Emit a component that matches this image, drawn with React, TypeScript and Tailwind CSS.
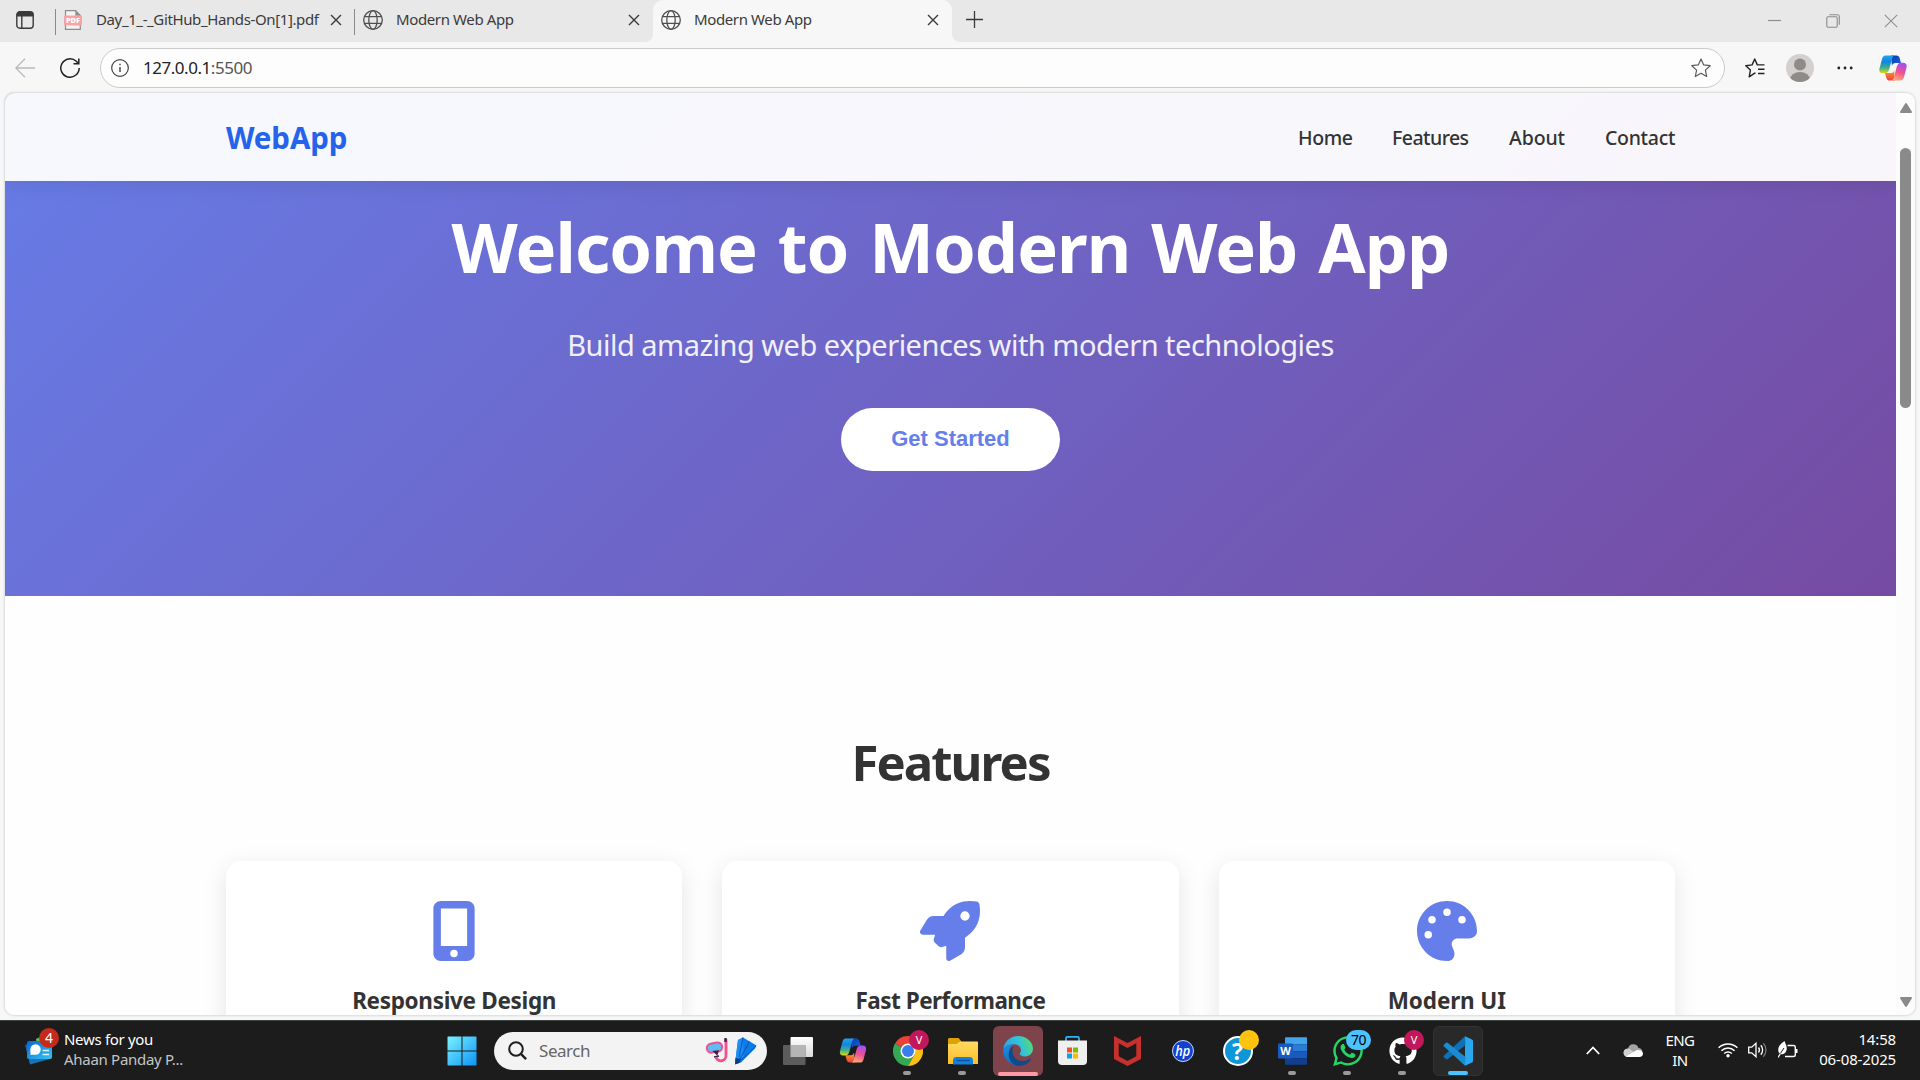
import type { ReactNode } from "react";
import { FaMobileScreenButton, FaPalette, FaRocket, FaWhatsapp, FaGithub } from "react-icons/fa6";

function Globe() {
  return (
    <svg className="h-5 w-5 shrink-0" viewBox="0 0 20 20" fill="none" stroke="#4f4f4f" strokeWidth="1.3">
      <circle cx="10" cy="10" r="9.3" />
      <ellipse cx="10" cy="10" rx="4.2" ry="9.3" />
      <path d="M1.6 6.6h16.8M1.6 13.4h16.8" />
    </svg>
  );
}

function PdfIcon() {
  return (
    <svg className="h-5 w-5 shrink-0" viewBox="0 0 20 20">
      <path d="M2.5.7h10l4.8 4.8v13.8H2.5z" fill="#f4f4f4" stroke="#8c8c8c" strokeWidth="1.2" />
      <path d="M12.3.7v5h5z" fill="#8c8c8c" />
      <rect x="1" y="5.5" width="18" height="10" rx="1" fill="#f7a3a3" />
      <text x="10" y="13.4" textAnchor="middle" fontSize="7.4" fontWeight="800" fill="#fff" fontFamily="Open Sans, sans-serif">PDF</text>
    </svg>
  );
}

function CloseX() {
  return (
    <svg className="h-3 w-3 shrink-0" viewBox="0 0 12 12" stroke="#3a3a3a" strokeWidth="1.4">
      <path d="M1 1l10 10M11 1L1 11" />
    </svg>
  );
}

function Tab({ icon, title, className }: { icon: ReactNode; title: string; className: string }) {
  return (
    <div className={`flex h-full items-center pr-[13px] ${className}`}>
      {icon}
      <span className="mb-0.5 ml-[13px] flex-1 whitespace-nowrap text-[15px] leading-5 tracking-[-0.38px] text-[#3b3b3b]">{title}</span>
      <CloseX />
    </div>
  );
}

function TabStrip() {
  return (
    <div className="flex h-[42px] bg-[#f7f7f7]">
      <div className="flex w-[653px] items-center rounded-br-lg bg-[#e8e8e8] pb-0.5">
        <svg className="ml-4 h-[18px] w-[18px]" viewBox="0 0 18 18">
          <rect x=".8" y=".8" width="16.4" height="16.4" rx="3" fill="none" stroke="#3a3a3a" strokeWidth="1.4" />
          <path d="M.8 5.5V4a3.2 3.2 0 0 1 3.2-3.2h10A3.2 3.2 0 0 1 17.2 4v1.5z" fill="#3a3a3a" />
          <path d="M5.8 5v12" stroke="#3a3a3a" strokeWidth="1.4" />
        </svg>
        <div className="ml-[21px] mt-1 h-[26px] w-px bg-[#8a8a8a]" />
        <Tab icon={<PdfIcon />} title="Day_1_-_GitHub_Hands-On[1].pdf" className="w-[299px] pl-[7px]" />
        <div className="-ml-px mt-1 h-[26px] w-px bg-[#8a8a8a]" />
        <Tab icon={<Globe />} title="Modern Web App" className="flex-1 pl-2" />
      </div>
      <div className="w-[299px] bg-linear-to-b from-[#e8e8e8] from-50% to-[#f7f7f7] to-50%">
        <Tab icon={<Globe />} title="Modern Web App" className="rounded-t-[10px] bg-[#f7f7f7] pb-0.5 pl-2" />
      </div>
      <div className="flex flex-1 items-center rounded-bl-lg bg-[#e8e8e8] pl-3.5 pr-[22px]">
        <svg className="mb-1 h-[17px] w-[17px]" viewBox="0 0 17 17" stroke="#3a3a3a" strokeWidth="1.3"><path d="M8.5 0v17M0 8.5h17" /></svg>
        <div className="flex-1" />
        <svg className="h-3.5 w-[13px]" viewBox="0 0 13 14" stroke="#8f8f8f" strokeWidth="1.2"><path d="M0 6.5h13" /></svg>
        <svg className="ml-[45px] h-3.5 w-3.5" viewBox="0 0 14 14" fill="none" stroke="#8a8a8a" strokeWidth="1.1">
          <rect x=".8" y="2.8" width="10.4" height="10.4" rx="1.2" />
          <path d="M3.4.8h8A1.9 1.9 0 0 1 13.3 2.7v8" />
        </svg>
        <svg className="ml-[44px] h-3.5 w-3.5" viewBox="0 0 14 14" stroke="#8f8f8f" strokeWidth="1.1"><path d="M.8.8l12.4 12.4M13.2.8L.8 13.2" /></svg>
      </div>
    </div>
  );
}

function Copilot({ id, className }: { id: string; className: string }) {
  return (
    <svg className={className} viewBox="0 0 28 26">
      <defs>
        <linearGradient id={`${id}a`} x1="0" y1="0" x2="0" y2="1">
          <stop offset="0" stopColor="#1fa4f2" /><stop offset=".35" stopColor="#1584e0" /><stop offset=".7" stopColor="#3fb28a" /><stop offset="1" stopColor="#f2d50f" />
        </linearGradient>
        <linearGradient id={`${id}b`} x1=".6" y1="0" x2=".3" y2="1">
          <stop offset="0" stopColor="#a44ff0" /><stop offset=".5" stopColor="#ee5290" /><stop offset="1" stopColor="#ffae74" />
        </linearGradient>
        <linearGradient id={`${id}c`} x1="0" y1="0" x2="1" y2="1">
          <stop offset="0" stopColor="#0a3fa8" /><stop offset="1" stopColor="#1760e8" />
        </linearGradient>
        <linearGradient id={`${id}d`} x1="0" y1="0" x2="0" y2="1">
          <stop offset="0" stopColor="#f8a21c" /><stop offset="1" stopColor="#ee3d45" />
        </linearGradient>
      </defs>
      <path d="M12 .5h5.5c1.7 0 2.600 1 3.100 2.600L22 8h-5.500c-2 0-3 .8-3.600 2.800z" fill={`url(#${id}c)`} />
      <path d="M16 25.500h-5.500c-1.700 0-2.600-1-3.100-2.600L6 18h5.500c2 0 3-.8 3.600-2.800z" fill={`url(#${id}d)`} />
      <path d="M6.500.5H16c-1.500 0-2.300 1.200-2.800 3L10.300 14c-.8 2.800-2 4.300-4.600 4.300H3.800C1 18.300-.2 16.300.5 13.500L3 4C3.600 1.700 4.700.5 6.500.5z" fill={`url(#${id}a)`} />
      <path d="M21.500 25.500H12c1.500 0 2.300-1.200 2.800-3L17.700 12c.8-2.800 2-4.300 4.600-4.300h1.900c2.800 0 4 2 3.300 4.800L25 22c-.6 2.300-1.700 3.500-3.500 3.500z" fill={`url(#${id}b)`} />
    </svg>
  );
}

function Toolbar() {
  return (
    <div className="flex h-[51px] items-center pl-[15px] pr-[13px]">
      <svg className="h-5 w-5" viewBox="0 0 20 20" fill="none" stroke="#b9b9b9" strokeWidth="1.3"><path d="M20 10H.8M10 .8L.8 10l9.2 9.2" /></svg>
      <svg className="ml-[25px] h-5 w-5" viewBox="0 0 20 20" fill="none" stroke="#222" strokeWidth="1.5">
        <path d="M19.2 10a9.2 9.2 0 1 1-2.9-6.700L18.600 5.600" /><path d="M18.8.5v5.300h-5.300" />
      </svg>
      <div className="ml-5 flex h-10 w-[1625px] items-center rounded-full border border-[#cbcbcb] bg-[#fdfdfd] pl-2.5 pr-[13px]">
        <svg className="h-[18px] w-[18px]" viewBox="0 0 18 18" fill="none" stroke="#444" strokeWidth="1.2">
          <circle cx="9" cy="9" r="8.3" /><path d="M9 8v5M9 4.8v1.500" strokeWidth="1.4" />
        </svg>
        <span className="ml-3.5 flex-1 text-[17px] leading-6 tracking-[-0.47px] text-[#222]">127.0.0.1<span className="text-[#555]">:5500</span></span>
        <svg className="h-5 w-5" viewBox="0 0 20 20" fill="none" stroke="#5a5a5a" strokeWidth="1.2" strokeLinejoin="round">
          <path d="M10 1l2.700 5.900 6.500.8-4.800 4.400 1.300 6.400L10 15.300l-5.700 3.200 1.300-6.400L.8 7.700l6.500-.8z" />
        </svg>
      </div>
      <svg className="ml-5 h-5 w-5" viewBox="0 0 20 20" fill="none" stroke="#222" strokeWidth="1.4" strokeLinejoin="round">
        <path d="M10.500 15.300l-.8-.2-5.500 3.700 1.200-6.700L.8 7.700l6.300-.8L9.700 1l2.600 5.900h7.200M13 11.200h6.500M13 15.500h6.500" />
      </svg>
      <svg className="ml-[21px] h-7 w-7" viewBox="0 0 28 28">
        <defs><clipPath id="avatar"><circle cx="14" cy="14" r="14" /></clipPath></defs>
        <circle cx="14" cy="14" r="14" fill="#d3d0cd" />
        <g clipPath="url(#avatar)" fill="#8f8b88"><circle cx="14" cy="10.500" r="6" /><ellipse cx="14" cy="26" rx="10" ry="8" /></g>
      </svg>
      <svg className="ml-[23px] h-4 w-4" viewBox="0 0 16 16" fill="#222"><circle cx="1.800" cy="8" r="1.400" /><circle cx="8" cy="8" r="1.400" /><circle cx="14.200" cy="8" r="1.400" /></svg>
      <Copilot id="tb" className="ml-[26px] h-[26px] w-7" />
    </div>
  );
}

function Card({ icon, title, track }: { icon: ReactNode; title: string; track: string }) {
  return (
    <div className="flex h-60 flex-1 flex-col items-center rounded-[15px] bg-white pt-10 shadow-[0_6px_25px_rgba(0,0,0,0.1)]">
      <div className="text-[60px] text-[#667eea]">{icon}</div>
      <h3 className={`mt-[22px] text-[22.5px] font-bold leading-9 text-[#333] ${track}`}>{title}</h3>
    </div>
  );
}

function Page() {
  return (
    <div className="h-[922px] w-[1891px] overflow-hidden bg-[#fefefe]">
      <nav className="relative z-10 flex h-[88px] items-center bg-white/95 pl-[221px] pr-[220px] pt-0.5 shadow-[0_2px_20px_rgba(0,0,0,0.1)]">
        <span className="text-[29.5px] font-bold leading-10 tracking-[-0.1px] text-[#2563eb]">WebApp</span>
        <div className="ml-auto flex text-[19.5px] font-medium leading-8 text-[#333]">
          <a className="w-[94px] tracking-[-0.4px]">Home</a>
          <a className="w-[117px] tracking-[-0.54px]">Features</a>
          <a className="w-[96px] tracking-[-0.1px]">About</a>
          <a className="w-[71px] tracking-[-0.3px]">Contact</a>
        </div>
      </nav>
      <section className="-mt-[176px] flex h-[591px] flex-col items-center bg-[linear-gradient(135deg,#667eea_0%,#764ba2_100%)] pt-[186px] text-white">
        <h1 className="text-[68.5px] font-bold leading-[112px] tracking-[-0.95px] [word-spacing:4px]">Welcome to Modern Web App</h1>
        <p className="mt-[18px] text-[29px] leading-[48px] tracking-[-0.5px] opacity-90">Build amazing web experiences with modern technologies</p>
        <button className="mt-[39px] h-[63px] w-[219px] rounded-full bg-white pb-0.5 font-['Liberation_Sans',sans-serif] text-[22px] font-bold text-[#667eea]">Get Started</button>
      </section>
      <section className="pl-[221px] pr-[221px] pt-[126px]">
        <h2 className="text-center text-[49px] font-bold leading-[80px] tracking-[-1.9px] text-[#333]">Features</h2>
        <div className="mt-[59px] flex gap-10">
          <Card icon={<FaMobileScreenButton />} title="Responsive Design" track="tracking-[-0.31px]" />
          <Card icon={<FaRocket />} title="Fast Performance" track="tracking-[-0.5px]" />
          <Card icon={<FaPalette />} title="Modern UI" track="tracking-[-0.13px]" />
        </div>
      </section>
    </div>
  );
}

function ScrollBar() {
  return (
    <div className="flex flex-1 flex-col items-center bg-[#fcfcfc] pb-[8px] pt-[10px]">
      <svg className="h-2.5 w-3" viewBox="0 0 12 10" fill="#8a8a8a"><path d="M5 .8a1.200 1.200 0 0 1 2 0L11.800 8.400a1 1 0 0 1-.9 1.600H1.100A1 1 0 0 1 .2 8.400z" /></svg>
      <div className="mt-[35px] h-[260px] w-[11px] rounded-full bg-[#8a8a8a]" />
      <svg className="mt-auto h-2.5 w-3" viewBox="0 0 12 10" fill="#8a8a8a"><path d="M5 9.200a1.200 1.200 0 0 0 2 0L11.800 1.600A1 1 0 0 0 10.900 0H1.100A1 1 0 0 0 .2 1.600z" /></svg>
    </div>
  );
}

function TaskItem({ children, dot }: { children: ReactNode; dot?: boolean }) {
  return (
    <div className="relative flex h-[50px] w-[55px] items-center justify-center">
      {children}
      {dot && <div className="absolute bottom-[1px] left-[23px] h-1 w-2 rounded-full bg-[#9a9a9a]" />}
    </div>
  );
}

function ProfileBadge() {
  return <div className="flex h-5 w-5 items-center justify-center rounded-full bg-[#c2185b] text-[11px] leading-none text-white">V</div>;
}

function NewsWidget() {
  return (
    <div className="flex w-[446px] pl-[25px]">
      <div className="relative w-[39px]">
        <svg className="mt-4 h-[28px] w-[28px]" viewBox="0 0 28 28">
          <defs><linearGradient id="news" x1="0" y1="0" x2="1" y2="1"><stop offset="0" stopColor="#0a63d8" /><stop offset="1" stopColor="#35c8ee" /></linearGradient></defs>
          <path d="M11 2l6-3 3 8-8 2z" fill="#5fc05a" />
          <path d="M0 8l3-1 20 13-18 7z" fill="#1565a8" />
          <rect x="2" y="4" width="25" height="18" rx="2" fill="url(#news)" />
          <path d="M4 22h21L5 27.500z" fill="#1a72b8" />
          <circle cx="10.500" cy="12.500" r="5.200" fill="#fff" /><path d="M5.500 13v5l5-.8z" fill="#fff" />
          <path d="M17.500 13.500h6.500M17.500 17.500h6.500" stroke="#d8f4ff" strokeWidth="1.600" />
        </svg>
        <div className="absolute left-[14px] top-[7px] flex h-5 w-5 items-center justify-center rounded-full bg-[#c42b1c] text-[14px] leading-none text-white">4</div>
      </div>
      <div className="flex flex-col pt-2 text-[15px] leading-5">
        <span className="tracking-[-0.31px] text-white">News for you</span>
        <span className="tracking-[-0.29px] text-[#c4c4c4]">Ahaan Panday P...</span>
      </div>
    </div>
  );
}

function SearchBox() {
  return (
    <div className="ml-[18px] mr-[3px] flex h-[38px] w-[273px] items-center rounded-full bg-[#f3f3f3] pl-3.5 pr-2.5">
      <svg className="h-[19px] w-[19px]" viewBox="0 0 19 19" fill="none" stroke="#1f1f1f" strokeWidth="2"><circle cx="8" cy="8" r="6.8" /><path d="M12.900 12.900l5.200 5.200" strokeWidth="2.400" /></svg>
      <span className="ml-3 mt-px flex-1 text-[17px] leading-6 tracking-[-0.45px] text-[#666]">Search</span>
      <svg className="h-7 w-[52px]" viewBox="0 0 52 28">
        <path d="M21 2v16a5.200 5.200 0 0 1-10 2.500" fill="none" stroke="#f2508c" strokeWidth="2.800" />
        <path d="M20.500 1v4" stroke="#43204f" strokeWidth="2.400" />
        <rect x="2" y="6" width="15.500" height="9" rx="4.500" transform="rotate(-10 10 12)" fill="#5fbdf5" stroke="#f2508c" strokeWidth="2" />
        <path d="M9 14.500l4-.5-1 3.500zM9 20l5-1" stroke="#43204f" strokeWidth="1.400" fill="#43204f" />
        <path d="M33 3l5-2.500 13.500 8-1.500 3L36 25.500l-6 1.500z" fill="#0c7be8" />
        <path d="M33 3l5-2.500.5 19.500-8.500 6z" fill="#1a90f5" />
        <path d="M38 .5L34 20M44.500 4.500L35 22M51 9L36 23" stroke="#0754b8" strokeWidth="1" />
        <path d="M30.500 21l5.500 1-1.500 4-4.500 1.500z" fill="#0b3c86" />
      </svg>
    </div>
  );
}

function Taskbar() {
  return (
    <div className="flex h-[60px] border-t border-[#3c4442] bg-[#1c1c1c]">
      <NewsWidget />
      <div className="flex w-[1043px] items-center">
        <svg className="ml-px h-[30px] w-[30px]" viewBox="0 0 30 30">
          <defs><linearGradient id="win" gradientUnits="userSpaceOnUse" x1="0" y1="0" x2="30" y2="30"><stop offset="0" stopColor="#7df3ff" /><stop offset="1" stopColor="#0a93f5" /></linearGradient></defs>
          <path d="M1 .5h13.500v14H.5V1zM15.500.5H29l.5.5v13.500h-14zM.5 15.500h14v14H1l-.5-.5zM15.500 15.500h14V29l-.5.5H15.500z" fill="url(#win)" />
        </svg>
        <div className="-ml-px"><SearchBox /></div>
        <TaskItem>
          <svg className="h-7 w-[30px]" viewBox="0 0 30 28">
            <defs><linearGradient id="tv" x1="0" y1="0" x2="0" y2="1"><stop offset="0" stopColor="#fff" /><stop offset="1" stopColor="#dadada" /></linearGradient></defs>
            <rect x="7.500" y="0" width="22.500" height="20" rx="1" fill="url(#tv)" />
            <rect x="0" y="8" width="22.500" height="20" rx="1" fill="#5c5c5c" />
            <rect x="7.500" y="8" width="15" height="12" fill="#b5b5b5" />
          </svg>
        </TaskItem>
        <TaskItem><Copilot id="ts" className="h-[25px] w-7" /></TaskItem>
        <TaskItem dot>
          <svg className="h-[30px] w-[30px]" viewBox="0 0 30 30">
            <path d="M15 15L2 7.500A15 15 0 0 1 28 7.500L28 8z" fill="#ea4335" />
            <path d="M2 7.500A15 15 0 0 0 15 30l6.500-11.300L15 15z" fill="#34a853" />
            <path d="M28 7.500A15 15 0 0 1 15 30l6.500-11.300V7.500z" fill="#fbc116" />
            <circle cx="15" cy="15" r="7.500" fill="#fff" /><circle cx="15" cy="15" r="6" fill="#3b7ded" />
          </svg>
          <div className="absolute left-[29px] top-[4px]"><ProfileBadge /></div>
        </TaskItem>
        <TaskItem dot>
          <svg className="h-[28px] w-[30px]" viewBox="0 0 30 28">
            <defs><linearGradient id="fe" x1="0" y1="0" x2="0" y2="1"><stop offset="0" stopColor="#ffdb63" /><stop offset="1" stopColor="#fdbd28" /></linearGradient></defs>
            <path d="M0 2.500C0 1.500.7 1 1.500 1h9l3 3.500L9 8H0z" fill="#e0a106" />
            <path d="M0 7h8.500L12 4.500h17c.6 0 1 .4 1 1V27H0z" fill="url(#fe)" />
            <path d="M5 27.500v-4A3.500 3.500 0 0 1 8.500 20h13a3.500 3.500 0 0 1 3.500 3.500v4z" fill="#1380dd" />
            <path d="M8.500 23.500h13" stroke="#0a4f9c" strokeWidth="1.300" />
          </svg>
        </TaskItem>
        <TaskItem>
          <div className="relative flex h-[50px] w-[50px] shrink-0 items-center justify-center rounded-md bg-[#7f434b]">
            <svg className="h-[30px] w-[30px]" viewBox="0 0 30 30">
              <defs>
                <linearGradient id="e1" x1="0" y1=".3" x2="1" y2="0"><stop offset="0" stopColor="#2ba7e6" /><stop offset=".5" stopColor="#33c3d8" /><stop offset="1" stopColor="#63e04f" /></linearGradient>
                <linearGradient id="e2" x1="0" y1="0" x2="0" y2="1"><stop offset="0" stopColor="#1b8fe0" /><stop offset="1" stopColor="#0c6fc4" /></linearGradient>
              </defs>
              <path d="M.3 13.500C1 5.500 7.300 0 15 0c8.700 0 15 6.200 15 12.800 0 4.400-3.500 7.700-7.800 7.700-3.700 0-5.500-1.600-5.500-2.700 0-.8 1.300-1.400 1.300-3.800 0-3-2.800-5.700-6.800-5.700C6 8.300 2 10.500.3 13.500z" fill="url(#e1)" />
              <path d="M.2 14C2 10 6 8.300 11.200 8.300c-4 1.400-5.500 5-4.800 9.200.8 5.700 5.600 10.500 11.300 11.900A15 15 0 0 1 .2 14z" fill="url(#e2)" />
              <path d="M11.200 10.200C8.500 13 9 19 12.500 22.400c3.600 3.300 9.300 3.800 14.500.3.700-.5 1.300.1.900.8-2 3.600-6.400 6.500-12.400 6.500C9.500 29 5.500 24 5.700 18c.1-4 2.200-6.800 5.500-7.800z" fill="#114a8b" />
            </svg>
            <div className="absolute bottom-0 left-[5px] h-1 w-10 rounded-full bg-[#ff99a4]" />
          </div>
        </TaskItem>
        <TaskItem>
          <svg className="h-[29px] w-[29px]" viewBox="0 0 29 29">
            <path d="M8 5V2.200C8 1.200 8.600.8 9.400.8h10.200c.9 0 1.400.5 1.400 1.400V5" fill="none" stroke="#2fb5f3" strokeWidth="1.700" />
            <path d="M0 4.500h29V25a4 4 0 0 1-4 4H4a4 4 0 0 1-4-4z" fill="#efefef" />
            <path d="M9 11.500h5v5H9z" fill="#f25022" /><path d="M15 11.500h5v5h-5z" fill="#7fba00" /><path d="M9 17.500h5v5H9z" fill="#00a4ef" /><path d="M15 17.500h5v5h-5z" fill="#ffb900" />
          </svg>
        </TaskItem>
        <TaskItem>
          <svg className="h-[30px] w-[27px]" viewBox="0 0 27 30"><path d="M0 0l13.500 7L27 0v23l-13.500 7L0 23zM4.700 7.200v13l8.800 4.700 8.800-4.700v-13L13.500 12z" fill="#c8302d" /></svg>
        </TaskItem>
        <TaskItem>
          <svg className="h-[22px] w-[22px]" viewBox="0 0 22 22">
            <circle cx="11" cy="11" r="10.500" fill="#1240d0" stroke="#c9d8ff" />
            <text x="10.700" y="15.500" textAnchor="middle" fill="#fff" fontSize="14" fontWeight="600" fontStyle="italic" fontFamily="Open Sans, sans-serif" textLength="15" lengthAdjust="spacingAndGlyphs">hp</text>
          </svg>
        </TaskItem>
        <TaskItem>
          <div className="flex h-[30px] w-[30px] items-center justify-center rounded-full border-2 border-white bg-[#0d96d8] text-[23px] font-bold leading-[26px] text-white">?</div>
          <div className="absolute left-[29px] top-1 h-5 w-5 rounded-full bg-[#ffc20e]" />
        </TaskItem>
        <TaskItem dot>
          <svg className="h-[28px] w-[29px]" viewBox="0 0 29 28">
            <path d="M7 1.500C7 .7 7.500.3 8 .3h20c.6 0 1 .4 1 1V7.200H7z" fill="#41a5ee" /><path d="M7 7.200h22v7H7z" fill="#2b7cd3" /><path d="M7 14.200h22v7H7z" fill="#185abd" /><path d="M7 21.200h22v5.600c0 .6-.4 1-1 1H8c-.6 0-1-.4-1-1z" fill="#103f91" />
            <rect x="0" y="6.500" width="15" height="15" rx="1" fill="#185abd" />
            <text x="7.500" y="18" textAnchor="middle" fill="#fff" fontSize="11" fontWeight="700" fontFamily="Open Sans, sans-serif">W</text>
          </svg>
        </TaskItem>
        <TaskItem dot>
          <FaWhatsapp className="h-[34px] w-[34px] shrink-0 text-[#25d366]" />
          <div className="absolute left-[26px] top-[4px] flex h-5 w-[25px] items-center justify-center rounded-full bg-[#4cc2ff] text-[14px] leading-none tracking-[-0.5px] text-black">70</div>
        </TaskItem>
        <TaskItem dot>
          <FaGithub className="h-[28px] w-[28px] text-white" />
          <div className="absolute left-[29px] top-[4px]"><ProfileBadge /></div>
        </TaskItem>
        <TaskItem>
          <div className="relative flex h-[50px] w-[50px] shrink-0 items-center justify-center rounded-md border border-[#333] bg-[#292929]">
            <svg className="h-[30px] w-[30px]" viewBox="0 0 30 30">
              <path d="M22 .3L29 3.500c.7.300 1 .9 1 1.600v19.800c0 .7-.3 1.300-1 1.600l-7 3.200z" fill="#29a8f0" />
              <path d="M22 .3L1 19.500a1.300 1.300 0 0 0 0 1.900l2 1.700c.5.400 1.100.400 1.600.1L22.500 9z" fill="#0f70b8" />
              <path d="M22 29.700L1 10.500a1.300 1.300 0 0 1 0-1.900l2-1.700c.5-.4 1.100-.4 1.600-.1L22.500 21z" fill="#1b8cd4" />
            </svg>
            <div className="absolute bottom-0 left-[14px] h-1 w-5 rounded-full bg-[#4cc2ff]" />
          </div>
        </TaskItem>
      </div>
      <div className="ml-auto flex items-center pb-px pr-6 text-white">
        <svg className="h-[9px] w-[14px]" viewBox="0 0 14 9" fill="none" stroke="#fff" strokeWidth="1.800"><path d="M.8 8L7 1.500 13.200 8" /></svg>
        <svg className="ml-[23px] h-[13px] w-5" viewBox="0 0 20 13">
          <path d="M5 4.500A5.500 5.500 0 0 1 15.500 4a4.500 4.500 0 0 1 4 3.500L8 9z" fill="#a3a3a3" />
          <path d="M4.500 13A4.300 4.300 0 1 1 6 4.600l8 6z" fill="#cfcfcf" />
          <path d="M3 12.500L13 6.500c3-1.200 7 .5 7 3.300 0 2-1.500 3.200-3.500 3.200H4.500z" fill="#fff" />
        </svg>
        <div className="ml-[22px] mr-px flex w-[30px] flex-col items-center text-[15px] leading-5 tracking-[-0.6px]"><span>ENG</span><span>IN</span></div>
        <svg className="ml-[22px] h-4 w-5" viewBox="0 0 20 16" fill="none" stroke="#fff" strokeWidth="1.500">
          <path d="M.6 5.800a13.300 13.300 0 0 1 18.800 0M3.400 8.700a9.300 9.300 0 0 1 13.200 0M6.200 11.500a5.400 5.400 0 0 1 7.600 0" /><circle cx="10" cy="13.800" r="1.700" fill="#fff" stroke="none" />
        </svg>
        <svg className="ml-2.5 h-4 w-5" viewBox="0 0 20 16" fill="none" stroke="#fff" strokeWidth="1.300">
          <path d="M.7 5.200h3L8 1.300v13.400L3.700 10.800h-3z" /><path d="M10.500 5.500a4 4 0 0 1 0 5M12.800 3.300a7 7 0 0 1 0 9.400" /><path d="M15.300 1.200a10 10 0 0 1 0 13.600" stroke="#777" />
        </svg>
        <svg className="mb-0.5 ml-2.5 h-[17px] w-5" viewBox="0 0 20 17">
          <path d="M9.500 4.500h6a1.800 1.800 0 0 1 1.800 1.800v7.400a1.800 1.800 0 0 1-1.800 1.800H7" fill="none" stroke="#fff" strokeWidth="1.400" />
          <path d="M18 8h1.500v4H18z" fill="#fff" />
          <path d="M6.500 0C2 3 0 6 .3 9.500.5 12 2 13.300 4 13.300c3.500-.3 5.500-4 4.500-8z" fill="#fff" /><path d="M0 16l6-9" stroke="#1c1c1c" strokeWidth="1" /><path d="M0 16.500L2.500 12.500" stroke="#fff" strokeWidth="1.200" />
        </svg>
        <div className="mb-0.5 ml-5 flex w-[78px] flex-col items-end text-[15px] leading-5 tracking-[-0.15px]"><span>14:58</span><span>06-08-2025</span></div>
      </div>
    </div>
  );
}

export default function App() {
  return (
    <div className="flex h-[1080px] w-[1920px] flex-col overflow-hidden bg-[#f7f7f7] font-['Noto_Sans',sans-serif]">
      <TabStrip />
      <Toolbar />
      <div className="mx-[5px] mb-[5px] flex h-[922px] overflow-hidden rounded-[9px] shadow-[0_0_2px_1px_rgba(0,0,0,0.12)]">
        <Page />
        <ScrollBar />
      </div>
      <Taskbar />
    </div>
  );
}
